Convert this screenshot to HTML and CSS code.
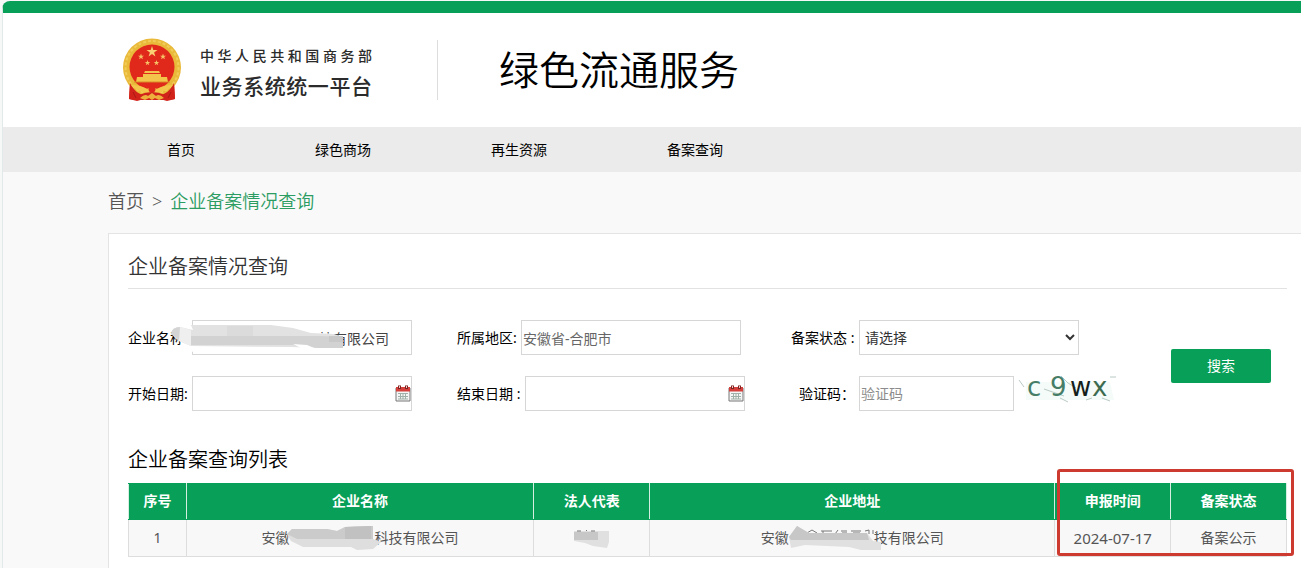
FILE: index.html
```html
<!DOCTYPE html>
<html lang="zh-CN">
<head>
<meta charset="utf-8">
<meta name="viewport" content="width=device-width, initial-scale=1">
<title>绿色流通服务</title>
<link rel="stylesheet" href="styles.css">
</head>
<body>
<div class="shell">
  <header class="header">
    <svg class="emblem" viewBox="0 0 58 64" aria-hidden="true">
      <path d="M7 45 L6 61 L14 63 L21 61 L37 61 L44 63 L52 61 L51 45 Z" fill="#d2231a"/>
      <circle cx="29" cy="29.500" r="29" fill="#e9b93a"/>
      <circle cx="29" cy="29.500" r="26.500" fill="none" stroke="#f2cc58" stroke-width="2" stroke-dasharray="3 2"/>
      <circle cx="29" cy="29" r="22.500" fill="#e0281b"/>
      <path d="M29 8 L30.300 12 L34.500 12 L31.100 14.500 L32.400 18.500 L29 16 L25.600 18.500 L26.900 14.500 L23.500 12 L27.700 12 Z" fill="#f8cf72"/>
      <g fill="#f5c266">
        <path d="M18 15.500 L18.800 17.700 L21 17.700 L19.200 19 L19.900 21.200 L18 19.900 L16.100 21.200 L16.800 19 L15 17.700 L17.200 17.700 Z"/>
        <path d="M40 15.500 L40.800 17.700 L43 17.700 L41.200 19 L41.900 21.200 L40 19.900 L38.100 21.200 L38.800 19 L37 17.700 L39.200 17.700 Z"/>
        <path d="M24.500 22 L25.200 24 L27.300 24 L25.600 25.300 L26.200 27.300 L24.500 26 L22.800 27.300 L23.400 25.300 L21.700 24 L23.800 24 Z"/>
        <path d="M33.500 22 L34.200 24 L36.300 24 L34.600 25.300 L35.200 27.300 L33.500 26 L31.800 27.300 L32.400 25.300 L30.700 24 L32.800 24 Z"/>
      </g>
      <path d="M22 33 H36 L37 35 H21 Z M20 36 H38 V39 H44 L45 44 H13 L14 39 H20 Z" fill="#f3c54a"/>
      <path d="M11 44 H47" stroke="#d98a26" stroke-width="1"/>
      <path d="M7 45 Q9 50 17 57 L12 62 L6 61 Z M51 45 Q49 50 41 57 L46 62 L52 61 Z" fill="#d2231a"/>
      <path d="M8 47 Q18 47 24 51 L29 48 L34 51 Q40 47 50 47 L44 52 Q38 53 33 56 L29 54 L25 56 Q20 53 14 52 Z" fill="#f3c54a"/>
      <circle cx="29" cy="51" r="3.500" fill="#e0281b"/>
      <path d="M16 57 Q29 51 42 57 L41 62 H17 Z" fill="#d2231a"/>
      <path d="M17 60 Q22 55 25 58 L29 55 L33 58 Q36 55 41 60 L36 62 L32 60 L29 62 L26 60 L22 62 Z" fill="#eeb03c"/>
      <path d="M10 54 L13 60 M48 54 L45 60" stroke="#a91a14" stroke-width="1"/>
    </svg>
    <div class="brand">
      <div class="brand-owner">中华人民共和国商务部</div>
      <div class="brand-name">业务系统统一平台</div>
    </div>
    <h1 class="site-title">绿色流通服务</h1>
  </header>

  <nav class="nav">
    <a href="#">首页</a>
    <a href="#">绿色商场</a>
    <a href="#">再生资源</a>
    <a href="#">备案查询</a>
  </nav>

  <main class="content">
    <div class="breadcrumb"><a href="#">首页</a><span>&gt;</span><a class="current" href="#">企业备案情况查询</a></div>

    <section class="card">
      <h2 class="card-title">企业备案情况查询</h2>

      <form class="search">
        <div class="fields">
          <div class="field">
            <label for="company">企业名称:</label>
            <input class="box company" id="company" type="text" value="技有限公司">
            <svg class="smudge smudge-company" viewBox="0 0 174 30" aria-hidden="true">
              <path d="M11 2 H102 L122 3 L148 9 L163 10 V21 L172 26 L120 30 L22 28 L11 22 Z" fill="#fff"/>
              <path d="M0 10 Q1 3 9 3 L22 6 L20 1 H100 L122 4 L140 9 L163 10 L172 13 V24 L148 24 L120 23 L20 22 L8 17 Z" fill="#e2e2e3"/>
              <path d="M20 12 H150 L172 13 V24 H146 L122 21 H20 Z" fill="#d2d2d3"/>
              <path d="M0 10 Q1 3 9 3 L10 17 Z" fill="#d4d4d5"/>
              <path d="M9 3 L20 6 V22 L8 17 Z" fill="#efeff0"/>
              <path d="M56 2 H82 V12 H56 Z" fill="#dbdbdc"/>
              <path d="M122 20 L136 21 L148 26 L130 24 Z" fill="#fff"/>
              <path d="M158 12 H172 V18 H158 Z" fill="#c8c8c9"/>
            </svg>
          </div>
          <div class="field">
            <label for="region">所属地区:</label>
            <input class="box region" id="region" type="text" value="安徽省-合肥市">
          </div>
          <div class="field field-wide">
            <label for="status">备案状态 :</label>
            <select class="box status" id="status"><option>请选择</option></select>
          </div>
          <div class="field">
            <label for="start">开始日期:</label>
            <div class="date">
              <input class="box" id="start" type="text">
              <button class="picker" type="button" aria-label="选择开始日期">
                <svg viewBox="0 0 16 17"><path d="M1 3 H15 V16 H1 Z" fill="#f4f5f4" stroke="#777" stroke-width="1"/><path d="M1 2 H15 V6.500 H1 Z" fill="#d5403d"/><path d="M3 0.500 H6 V4 H3 Z M10 0.500 H13 V4 H10 Z" fill="#7c2421"/><path d="M4 1 H5 V3 H4 Z M11 1 H12 V3 H11 Z" fill="#f3c9c7"/><path d="M3 8.500 H13 M3 11.500 H13 M3 14 H13 M5.500 8 V14 M8 8 V14 M10.500 8 V14" stroke="#9fb0a8" stroke-width="1" fill="none"/></svg>
              </button>
            </div>
          </div>
          <div class="field field-wide">
            <label for="end">结束日期 :</label>
            <div class="date">
              <input class="box" id="end" type="text">
              <button class="picker" type="button" aria-label="选择结束日期">
                <svg viewBox="0 0 16 17"><path d="M1 3 H15 V16 H1 Z" fill="#f4f5f4" stroke="#777" stroke-width="1"/><path d="M1 2 H15 V6.500 H1 Z" fill="#d5403d"/><path d="M3 0.500 H6 V4 H3 Z M10 0.500 H13 V4 H10 Z" fill="#7c2421"/><path d="M4 1 H5 V3 H4 Z M11 1 H12 V3 H11 Z" fill="#f3c9c7"/><path d="M3 8.500 H13 M3 11.500 H13 M3 14 H13 M5.500 8 V14 M8 8 V14 M10.500 8 V14" stroke="#9fb0a8" stroke-width="1" fill="none"/></svg>
              </button>
            </div>
          </div>
          <div class="field field-wide field-code">
            <label for="code">验证码：</label>
            <input class="box code" id="code" type="text" placeholder="验证码">
            <svg class="captcha" viewBox="0 -8 100 52" role="img" aria-label="c9wx">
              <path d="M8 6 H92 L96 24 H8 Z" fill="#f4fbf8"/>
              <path d="M1 4 L6 11 M26 13 L46 20 M43 0 L50 7 L58 12 M42 22 L50 26 M84 22 L92 25 M68 24 L74 22 M92 1 H98" stroke="#b9cac3" stroke-width="1" fill="none"/>
              <text x="9" y="20" fill="#467d67">c</text>
              <text x="32" y="20" fill="#467d67">9</text>
              <text x="52" y="20" fill="#14201b">w</text>
              <text x="74" y="20" fill="#3c6b50">x</text>
            </svg>
          </div>
        </div>
        <button class="submit" type="submit">搜索</button>
      </form>

      <h3 class="list-title">企业备案查询列表</h3>
      <div class="table-wrap">
        <table class="list">
          <colgroup><col class="c5"><col class="c30"><col class="c10"><col class="c35"><col class="c10"><col class="c10"></colgroup>
          <thead>
            <tr><th>序号</th><th>企业名称</th><th>法人代表</th><th>企业地址</th><th>申报时间</th><th>备案状态</th></tr>
          </thead>
          <tbody>
            <tr>
              <td>1</td>
              <td>安徽<span class="gap"><svg class="smudge smudge-name" viewBox="0 0 98 28" aria-hidden="true">
                <path d="M0 9 L5 4 H40 L50 6 L58 2 L86 1 V14 L94 17 L86 24 L70 25 L64 22 L16 22 L4 16 Z" fill="#dededf"/>
                <path d="M0 9 L5 4 H40 L50 6 L58 2 L86 1 V14 H10 Z" fill="#cbcbcc"/>
                <path d="M58 2 L84 1 V14 H58 Z" fill="#c1c1c2"/>
              </svg></span>科技有限公司</td>
              <td><span class="gap gap-person"><svg class="smudge smudge-person" viewBox="0 0 38 22" aria-hidden="true">
                <path d="M1 3 H36 V14 L34 20 L20 18 L12 15 L1 13 Z" fill="#e0e0e1"/>
                <path d="M1 4 H25 V12 H1 Z" fill="#c7c7c8"/>
                <path d="M4 3 H8 M13 3 L14 2 M18 3 H22" stroke="#777" stroke-width="1"/>
              </svg></span></td>
              <td>安徽<span class="gap"><svg class="smudge smudge-address" viewBox="0 0 94 28" aria-hidden="true">
                <path d="M18 8 L23 5 L28 8 M32 6 H43 M34 6 V9 M46 9 L49 5 M52 6 H58 M53 8 H58 M62 6 H72 M64 8 H71 M76 6 L80 5 V9 M84 5 V9 M86 7 L88 9" stroke="#777" stroke-width="1" fill="none"/>
                <path d="M0 12 L8 1 L20 8 H78 L84 16 L92 17 V25 H72 L60 22 L16 20 L2 23 Z" fill="#e0e0e1"/>
                <path d="M0 12 L8 1 L20 8 H78 L80 15 H2 Z" fill="#c7c7c8"/>
              </svg></span>技有限公司</td>
              <td class="day">2024-07-17</td>
              <td>备案公示</td>
            </tr>
          </tbody>
        </table>
        <div class="highlight"></div>
      </div>
    </section>
  </main>
</div>
</body>
</html>
```
FILE: styles.css
```css
* {
  box-sizing: border-box;
}

body {
  margin: 0;
  padding: 1px 0 0 2px;
  background: #f6f8f8;
  color: #000;
  font: 14px/20px "Noto Sans", "Noto Sans CJK SC", sans-serif;
}

a {
  color: inherit;
  text-decoration: none;
}

input,
select,
button {
  font: inherit;
}

h1,
h2,
h3 {
  margin: 0;
  font-weight: 350;
}

.shell {
  min-height: calc(100vh - 1px);
  overflow: hidden;
  border-left: 1px solid #e3e9e8;
  border-top: 12px solid #08a058;
  border-top-left-radius: 8px;
  background: #f9f9f9;
}

/* Header */

.header {
  display: flex;
  align-items: center;
  height: 114px;
  padding-left: 120px;
  background: #fff;
}

.emblem {
  width: 58px;
  height: 64px;
}

.brand {
  width: 172px;
  margin-left: 19px;
  padding-top: 3px;
  color: #2b2b2b;
  font-weight: 500;
}

.brand-owner {
  font-size: 14px;
  line-height: 28px;
  text-align-last: justify;
}

.brand-name {
  font-size: 21px;
  line-height: 32px;
  text-align-last: justify;
}

.site-title {
  margin-left: 65px;
  padding-left: 61px;
  border-left: 1px solid #ddd;
  font-size: 40px;
  line-height: 60px;
}

.nav {
  display: flex;
  padding-left: 104px;
  background: #ebebeb;
}

.nav a {
  padding: 0 60px;
  line-height: 45px;
}

/* Content */

.content {
  padding-left: 105px;
}

.breadcrumb {
  display: flex;
  gap: 8px;
  padding: 14px 0 17px;
  color: #555;
  font-size: 18px;
  font-weight: 350;
  line-height: 30px;
}

.breadcrumb .current {
  color: #2b9c62;
}

.card {
  padding: 13px 14px 20px 19px;
  border: solid #e4e4e4;
  border-width: 1px 0 0 1px;
  background: #fff;
}

.card-title {
  padding-bottom: 1px;
  border-bottom: 1px solid #e2e2e2;
  color: #333;
  font-size: 20px;
  line-height: 40px;
}

.search {
  display: flex;
  align-items: center;
  padding: 31px 16px 0 0;
}

.fields {
  display: grid;
  flex: 1;
  grid-template-columns: 329fr 334fr 380fr;
  row-gap: 21px;
}

.field {
  position: relative;
  display: flex;
  align-items: center;
}

.field label {
  flex: none;
  width: 64px;
}

.field-wide label {
  width: 68px;
}

.field-code label {
  padding-left: 8px;
}

.box {
  width: 220px;
  height: 35px;
  padding: 0 1px;
  border: 1px solid #d6d6d6;
  border-radius: 0;
  background: #fff;
  color: #444;
}

.company {
  padding-right: 22px;
  text-align: right;
}

.region {
  color: #666;
}

.status {
  color: #333;
}

.code {
  width: 155px;
}

.code::placeholder {
  color: #8c8c8c;
}

.date {
  position: relative;
}

.date .box {
  display: block;
  padding-right: 20px;
}

.picker {
  position: absolute;
  top: 9px;
  right: 1px;
  width: 16px;
  height: 17px;
  padding: 0;
  border: 0;
  background: none;
}

.picker svg {
  display: block;
}

.captcha {
  flex: none;
  width: 100px;
  height: 52px;
  margin: -9px 0 -9px 4px;
  font: 26px "DejaVu Sans", sans-serif;
}

.submit {
  width: 100px;
  height: 34px;
  padding: 0;
  border: 0;
  border-radius: 2px;
  background: #08a058;
  color: #fff;
}

/* Result list */

.list-title {
  padding: 28px 0 2px;
  font-size: 20px;
  line-height: 42px;
}

.table-wrap {
  position: relative;
}

.list {
  width: 100%;
  border-collapse: collapse;
  table-layout: fixed;
  text-align: center;
}

.list th,
.list td {
  padding: 8px 0;
  border: 1px solid #ddd;
}

.list th {
  padding: 7px 0 8px;
  border-color: #08a058 #d5eee2;
  background: #08a058;
  color: #fff;
  font-weight: 700;
}

.list td {
  background: #f8f8f8;
  color: #555;
}

.list .day {
  font-size: 15px;
}

.c5 { width: 5%; }
.c10 { width: 10%; }
.c30 { width: 30%; }
.c35 { width: 35%; }

.highlight {
  position: absolute;
  top: -14px;
  right: -7px;
  bottom: 1px;
  width: calc(20% + 5px);
  border: 3px solid #cc3a30;
  border-radius: 3px;
}

/* Blurred-out names */

.gap {
  position: relative;
  display: inline-block;
  width: 85px;
  height: 14px;
}

.gap-person {
  width: 38px;
}

.smudge {
  position: absolute;
}

.smudge-company {
  top: 4px;
  left: 43px;
  width: 174px;
  height: 30px;
}

.smudge-name {
  top: -4px;
  left: -3px;
  width: 98px;
  height: 28px;
}

.smudge-person {
  top: -1px;
  left: 0;
  width: 38px;
  height: 22px;
}

.smudge-address {
  top: -4px;
  left: 0;
  width: 94px;
  height: 28px;
}
```
